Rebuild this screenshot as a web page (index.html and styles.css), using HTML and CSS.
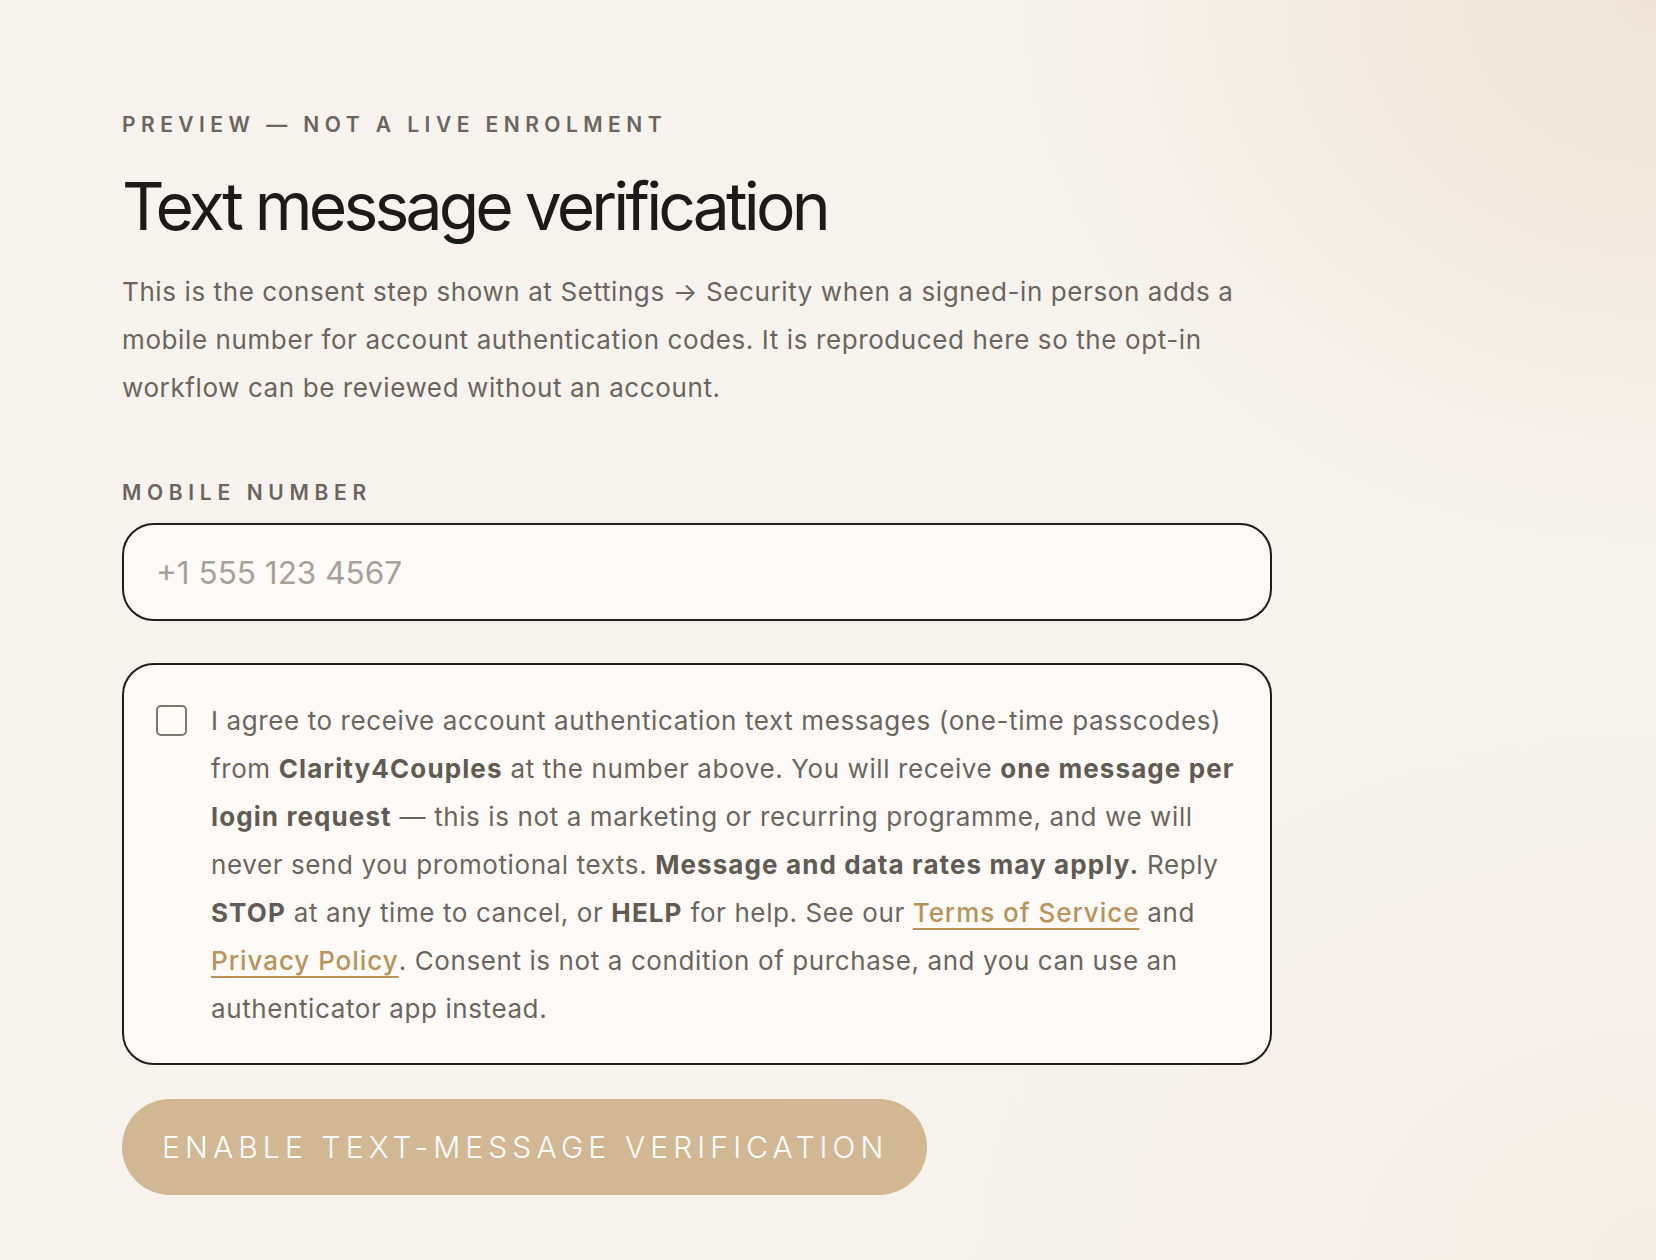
FILE: index.html
```html
<!DOCTYPE html>
<html lang="en">
<head>
<meta charset="utf-8">
<title>Text message verification</title>
<link rel="stylesheet" href="styles.css">
</head>
<body>
<main class="page">
  <p class="eyebrow">Preview — not a live enrolment</p>
  <h1 class="title">Text message verification</h1>
  <p class="intro">This is the consent step shown at Settings → Security when a signed-in person adds a mobile number for account authentication codes. It is reproduced here so the opt-in workflow can be reviewed without an account.</p>

  <form class="form">
    <label class="field-label" for="phone">Mobile number</label>
    <input class="phone" id="phone" type="tel" placeholder="+1 555 123 4567">

    <label class="consent">
      <input class="check" type="checkbox">
      <span class="consent-text">I agree to receive account authentication text messages (one-time passcodes) from <strong>Clarity4Couples</strong> at the number above. You will receive <strong>one message per login request</strong> — this is not a marketing or recurring programme, and we will never send you promotional texts. <strong>Message and data rates may apply.</strong> Reply <strong>STOP</strong> at any time to cancel, or <strong>HELP</strong> for help. See our <a href="#">Terms of Service</a> and <a href="#">Privacy Policy</a>. Consent is not a condition of purchase, and you can use an authenticator app instead.</span>
    </label>

    <button class="submit" type="button">Enable text-message verification</button>
  </form>
</main>
</body>
</html>
```

FILE: styles.css
```css
html, body {
  margin: 0;
  padding: 0;
}

body {
  min-height: 1260px;
  background-color: #f6f3ee;
  background-image:
    radial-gradient(ellipse 700px 600px at 100% 0%, rgba(236, 222, 205, 0.7), rgba(240, 230, 218, 0) 100%),
    radial-gradient(ellipse 900px 700px at 100% 100%, rgba(240, 230, 218, 0.45), rgba(240, 230, 218, 0) 100%);
  font-family: Inter, "Noto Sans", "Liberation Sans", sans-serif;
  color: #6b655e;
}

.page {
  width: 1150px;
  padding: 111px 0 60px 122px;
  box-sizing: content-box;
}

.eyebrow {
  margin: 0;
  font-size: 21px;
  line-height: 28px;
  font-weight: 600;
  letter-spacing: 0.26em;
  text-transform: uppercase;
  color: #6b655e;
}

.title {
  margin: 27px 0 0 0;
  font-size: 66px;
  line-height: 80px;
  font-weight: 400;
  letter-spacing: -0.058em;
  color: #1d1b19;
}

.intro {
  margin: 22px 0 0 0;
  font-size: 26px;
  line-height: 48px;
  letter-spacing: 0.6px;
  color: #6b655e;
}

.form {
  display: flex;
  flex-direction: column;
  align-items: flex-start;
  margin-top: 67px;
}

.field-label {
  font-size: 21px;
  line-height: 28px;
  font-weight: 600;
  letter-spacing: 0.27em;
  text-transform: uppercase;
  color: #6b655e;
}

.phone {
  margin-top: 16px;
  width: 100%;
  height: 98px;
  box-sizing: border-box;
  padding: 0 32px;
  border: 2px solid #1f1c1a;
  border-radius: 32px;
  background: #fdfaf7;
  font-family: inherit;
  font-size: 31.5px;
  color: #2a2623;
  outline: none;
}

.phone::placeholder {
  color: #a7a19a;
}

.consent {
  margin-top: 42px;
  width: 100%;
  box-sizing: border-box;
  display: flex;
  align-items: flex-start;
  gap: 24px;
  padding: 32px 32px 30px 32px;
  border: 2px solid #1f1c1a;
  border-radius: 32px;
  background: #fdfaf7;
}

.check {
  appearance: none;
  -webkit-appearance: none;
  flex: 0 0 auto;
  width: 31px;
  height: 31px;
  margin: 8px 0 0 0;
  box-sizing: border-box;
  border: 2px solid #7d7770;
  border-radius: 5px;
  background: #fdfaf7;
}

.consent-text {
  font-size: 26px;
  line-height: 48px;
  letter-spacing: 0.6px;
  color: #6b655e;
}

.consent-text strong {
  font-weight: 700;
  letter-spacing: 1.1px;
  color: #615b54;
}

.consent-text a {
  color: #b8935a;
  font-weight: 500;
  letter-spacing: 0.95px;
  text-decoration: underline;
  text-decoration-thickness: 2px;
  text-underline-offset: 6px;
}

.submit {
  margin-top: 34px;
  height: 96px;
  padding: 0 39px 0 40px;
  border: none;
  border-radius: 48px;
  background: #d1b893;
  color: #ffffff;
  font-family: inherit;
  font-size: 30px;
  font-weight: 300;
  letter-spacing: 0.171em;
  text-transform: uppercase;
  cursor: pointer;
}
```
